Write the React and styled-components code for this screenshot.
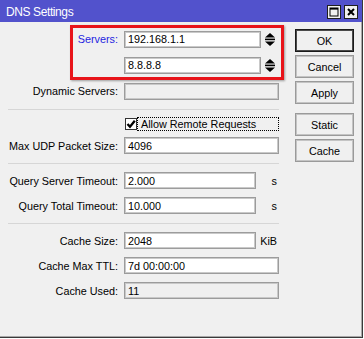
import styled, { createGlobalStyle } from 'styled-components'

const Global = createGlobalStyle`
  html, body {
    margin: 0;
    padding: 0;
    background: #fff;
  }
  body {
    font-family: "Liberation Sans", Arial, sans-serif;
    font-size: 10.8px;
    color: #000;
  }
`

const Window = styled.div`
  position: relative;
  width: 363px;
  height: 338px;
  box-sizing: border-box;
  background: #f0f0f0;
  border-right: 1px solid #3a3a3a;
  border-bottom: 1px solid #3a3a3a;
  box-shadow: inset -1px -1px 0 #a8a8a8;
  display: flex;
  flex-direction: column;
`

const TitleBar = styled.div`
  height: 22px;
  flex: none;
  background: #5252cc;
  color: #fff;
  display: flex;
  align-items: center;
  padding: 0 4px 0 6px;
  font-size: 12px;
  letter-spacing: -0.4px;
`

const Title = styled.span`
  flex: 1;
  padding-top: 1px;
`

const TitleButtons = styled.div`
  display: flex;
  gap: 3px;
  margin-top: 2px;
`

const TitleButton = styled.div`
  width: 14px;
  height: 14px;
  box-sizing: border-box;
  border: 1px solid #1e1e1e;
  background: #f0f0f0;
  display: flex;
  align-items: center;
  justify-content: center;
`

const Body = styled.div`
  display: flex;
  gap: 16px;
  padding-top: 4px;
`

const Form = styled.div`
  width: 279px;
  display: flex;
  flex-direction: column;
`

const Row = styled.div`
  display: grid;
  grid-template-columns: 118px 155px;
  column-gap: 6px;
  align-items: center;
  height: ${(p) => p.$h || 25}px;
`

const Label = styled.span`
  text-align: right;
  white-space: nowrap;
  color: ${(p) => (p.$accent ? '#1f1fe0' : '#000')};
`

const Field = styled.div`
  display: flex;
  align-items: center;
`

const Input = styled.div`
  width: ${(p) => p.$w || 155}px;
  height: 17px;
  box-sizing: border-box;
  border: 1px solid #9c9c9c;
  box-shadow: inset 0 0 0 1px #c9c9c9;
  background: ${(p) => (p.$disabled ? '#f0f0f0' : '#fff')};
  padding-left: 3px;
  display: flex;
  align-items: center;
  white-space: nowrap;
  overflow: hidden;
`

const Addon = styled.div`
  flex: 1;
  display: flex;
  align-items: center;
  justify-content: ${(p) => (p.$center ? 'center' : 'flex-end')};
  padding-right: ${(p) => (p.$center ? 0 : 2)}px;
`

const Separator = styled.div`
  height: 1px;
  margin: 5px 0 4px 8px;
  background: #d6d6d6;
`

const CheckBox = styled.div`
  width: 12px;
  height: 12px;
  margin-left: 1px;
  box-sizing: border-box;
  border: 1px solid #333;
  background: #fff;
  display: flex;
  align-items: center;
  justify-content: center;
`

const FocusLabel = styled.div`
  flex: 1;
  height: 14px;
  box-sizing: border-box;
  border: 1px dotted #000;
  padding-left: 3px;
  display: flex;
  align-items: center;
  white-space: nowrap;
`

const Buttons = styled.div`
  width: 59px;
  margin-top: 3px;
  display: flex;
  flex-direction: column;
  gap: 3px;
`

const Button = styled.button`
  height: 23px;
  margin: 0;
  margin-top: ${(p) => p.$space || 0}px;
  padding: 0;
  box-sizing: border-box;
  font-family: inherit;
  font-size: 10.8px;
  color: #000;
  background: #f0f0f0;
  border: 1px solid ${(p) => (p.$default ? '#1a1a1a' : '#9a9a9a')};
  box-shadow: inset 0 0 0 1px ${(p) => (p.$default ? '#4a4a4a' : '#c4c4c4')};
  border-radius: 0;
`

const Highlight = styled.div`
  position: absolute;
  left: 70px;
  top: 25px;
  width: 214px;
  height: 55px;
  box-sizing: border-box;
  border: 3px solid #e8141a;
  box-shadow: 1px 1px 2px rgba(0, 0, 0, 0.35);
  pointer-events: none;
`

const Spinner = () => (
  <svg width="10" height="13" viewBox="0 0 10 13">
    <polygon points="0,4.5 5,0 10,4.5" fill="#000" />
    <rect x="0" y="5.6" width="10" height="1.6" fill="#000" />
    <polygon points="0,8.4 10,8.4 5,13" fill="#000" />
  </svg>
)

const Check = () => (
  <svg width="10" height="10" viewBox="0 0 10 10">
    <path d="M1.5 5 L4 7.8 L8.8 1.8" fill="none" stroke="#000" strokeWidth="2.3" />
  </svg>
)

const MaxIcon = () => (
  <svg width="10" height="10" viewBox="0 0 10 10">
    <rect x="1" y="1" width="8" height="8" fill="none" stroke="#000" strokeWidth="1" />
    <rect x="1" y="1" width="8" height="1.6" fill="#000" />
  </svg>
)

const CloseIcon = () => (
  <svg width="10" height="10" viewBox="0 0 10 10">
    <path d="M2 2 L8 8 M8 2 L2 8" stroke="#000" strokeWidth="2" />
  </svg>
)

export default function App() {
  return (
    <>
      <Global />
      <Window>
        <TitleBar>
          <Title>DNS Settings</Title>
          <TitleButtons>
            <TitleButton>
              <MaxIcon />
            </TitleButton>
            <TitleButton>
              <CloseIcon />
            </TitleButton>
          </TitleButtons>
        </TitleBar>
        <Body>
          <Form>
            <Row $h={26}>
              <Label $accent>Servers:</Label>
              <Field>
                <Input $w={137}>192.168.1.1</Input>
                <Addon $center>
                  <Spinner />
                </Addon>
              </Field>
            </Row>
            <Row $h={26}>
              <span />
              <Field>
                <Input $w={137}>8.8.8.8</Input>
                <Addon $center>
                  <Spinner />
                </Addon>
              </Field>
            </Row>
            <Row $h={26}>
              <Label>Dynamic Servers:</Label>
              <Field>
                <Input $disabled />
              </Field>
            </Row>
            <Separator />
            <Row $h={19}>
              <span />
              <Field>
                <CheckBox>
                  <Check />
                </CheckBox>
                <FocusLabel>Allow Remote Requests</FocusLabel>
              </Field>
            </Row>
            <Row>
              <Label>Max UDP Packet Size:</Label>
              <Field>
                <Input>4096</Input>
              </Field>
            </Row>
            <Separator />
            <Row>
              <Label>Query Server Timeout:</Label>
              <Field>
                <Input $w={132}>2.000</Input>
                <Addon>s</Addon>
              </Field>
            </Row>
            <Row>
              <Label>Query Total Timeout:</Label>
              <Field>
                <Input $w={132}>10.000</Input>
                <Addon>s</Addon>
              </Field>
            </Row>
            <Separator />
            <Row>
              <Label>Cache Size:</Label>
              <Field>
                <Input $w={132}>2048</Input>
                <Addon>KiB</Addon>
              </Field>
            </Row>
            <Row>
              <Label>Cache Max TTL:</Label>
              <Field>
                <Input>7d 00:00:00</Input>
              </Field>
            </Row>
            <Row>
              <Label>Cache Used:</Label>
              <Field>
                <Input $disabled>11</Input>
              </Field>
            </Row>
          </Form>
          <Buttons>
            <Button $default>OK</Button>
            <Button>Cancel</Button>
            <Button>Apply</Button>
            <Button $space={6}>Static</Button>
            <Button>Cache</Button>
          </Buttons>
        </Body>
        <Highlight />
      </Window>
    </>
  )
}
